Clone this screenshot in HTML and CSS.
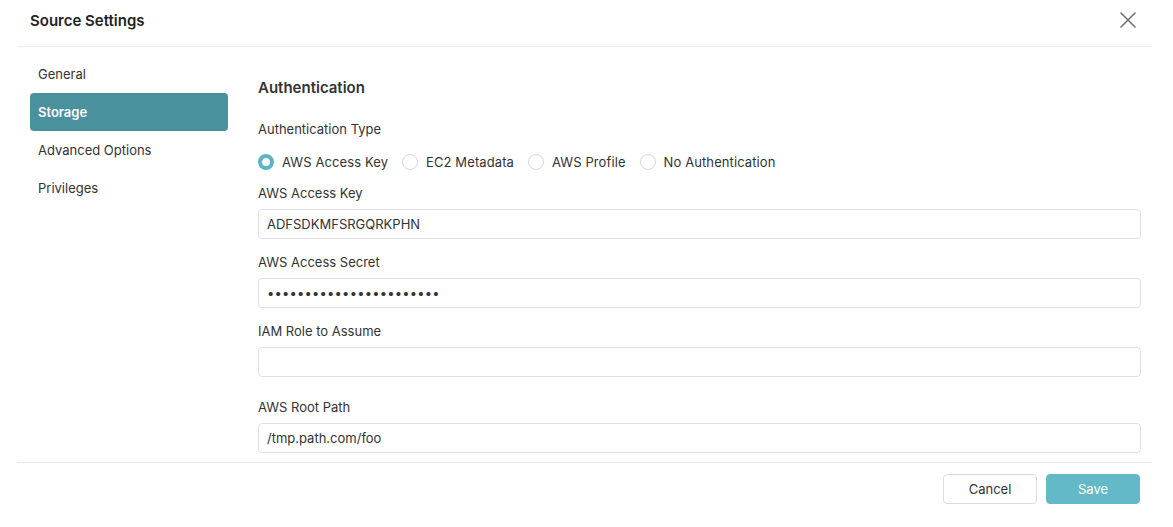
FILE: index.html
```html
<!DOCTYPE html>
<html>
<head>
<meta charset="utf-8">
<link rel="stylesheet" href="styles.css">
</head>
<body>
<div class="modal">
  <header class="header">
    <h1 class="title">Source Settings</h1>
    <button class="close" aria-label="Close">
      <svg width="18" height="18" viewBox="0 0 18 18"><path d="M2 2L16 16M16 2L2 16" stroke="#6a6e72" stroke-width="1.5" fill="none" stroke-linecap="round"/></svg>
    </button>
  </header>
  <div class="body">
    <nav class="sidebar">
      <div class="nav-item">General</div>
      <div class="nav-item active">Storage</div>
      <div class="nav-item">Advanced Options</div>
      <div class="nav-item">Privileges</div>
    </nav>
    <main class="content">
      <h2 class="section">Authentication</h2>
      <div class="label type-label">Authentication Type</div>
      <div class="radios">
        <label class="radio"><span class="dot checked"></span>AWS Access Key</label>
        <label class="radio"><span class="dot"></span>EC2 Metadata</label>
        <label class="radio"><span class="dot"></span>AWS Profile</label>
        <label class="radio"><span class="dot"></span>No Authentication</label>
      </div>
      <div class="field">
        <div class="label">AWS Access Key</div>
        <div class="input">ADFSDKMFSRGQRKPHN</div>
      </div>
      <div class="field">
        <div class="label">AWS Access Secret</div>
        <div class="input secret">•••••••••••••••••••••••</div>
      </div>
      <div class="field">
        <div class="label">IAM Role to Assume</div>
        <div class="input"></div>
      </div>
      <div class="field gap-top">
        <div class="label">AWS Root Path</div>
        <div class="input">/tmp.path.com/foo</div>
      </div>
    </main>
  </div>
  <footer class="footer">
    <button class="btn cancel">Cancel</button>
    <button class="btn save">Save</button>
  </footer>
</div>
</body>
</html>
```
FILE: styles.css
```css
* { box-sizing: border-box; }
html, body { margin: 0; padding: 0; background: #fff; }
body {
  font-family: Inter, "Noto Sans", sans-serif;
  color: #333;
  font-size: 13px;
  width: 1173px;
  height: 527px;
  overflow: hidden;
}
.modal { display: flex; flex-direction: column; height: 527px; }
.header {
  display: flex;
  align-items: center;
  justify-content: space-between;
  height: 47px;
  margin: 0 21px 0 17px;
  padding: 0 15px 0 13px;
  border-bottom: 1px solid #eeeeee;
}
.title { margin: 0; font-size: 15px; font-weight: 600; color: #222; padding-bottom: 6px; }
.close {
  border: 0; background: none; padding: 0; width: 18px; height: 18px;
  margin-bottom: 6px; display: flex;
}
.body { display: flex; flex: 1; min-height: 0; }
.sidebar {
  width: 198px;
  margin-left: 30px;
  padding-top: 8px;
  display: flex;
  flex-direction: column;
}
.nav-item {
  height: 38px;
  line-height: 38px;
  padding-left: 8px;
  color: #333;
  font-size: 13px;
  border-radius: 4px;
}
.nav-item.active {
  background: #4a919e;
  color: #fff;
  font-weight: 600;
}
.content {
  flex: 1;
  margin-left: 30px;
  margin-right: 32px;
  padding-top: 31px;
}
.section { margin: 0; font-size: 15px; font-weight: 600; color: #333; line-height: 20px; }
.label { font-size: 13px; line-height: 16px; color: #333; }
.type-label { margin-top: 23px; }
.radios { display: flex; align-items: center; margin-top: 17px; height: 16px; }
.radio { display: flex; align-items: center; margin-right: 14px; font-size: 13px; color: #333; letter-spacing: 0.1px; }
.dot {
  width: 16px; height: 16px; border-radius: 50%;
  border: 1px solid #d8d8d8; margin-right: 8px; background: #fff;
}
.dot.checked { border: 4px solid #5bb5c6; }
.field { margin-top: 15px; }
.field .label { margin-bottom: 8px; }
.field.gap-top { margin-top: 22px; }
.input {
  height: 30px;
  border: 1px solid #e1e1e1;
  border-radius: 4px;
  padding: 0 8px;
  line-height: 28px;
  font-size: 13px;
  color: #333;
}
.secret { letter-spacing: 0.2px; font-size: 13px; }
.footer {
  height: 65px;
  margin: 0 21px 0 17px;
  border-top: 1px solid #e8e8e8;
  display: flex;
  justify-content: flex-end;
  align-items: flex-start;
  padding-top: 11px;
  padding-right: 12px;
  gap: 9px;
}
.btn {
  width: 94px; height: 30px; border-radius: 4px;
  font-family: Inter, "Noto Sans", sans-serif; font-size: 13px;
}
.cancel { background: #fff; border: 1px solid #dcdcdc; color: #333; }
.save { background: #64b9c8; border: 1px solid #64b9c8; color: #fff; }
```
